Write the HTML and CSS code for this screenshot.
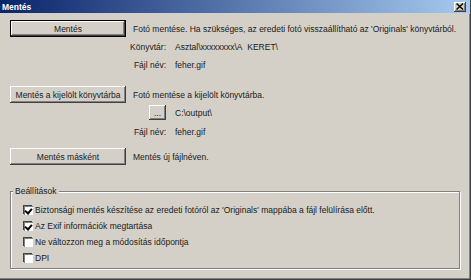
FILE: index.html
```html
<!DOCTYPE html>
<html lang="hu">
<head>
    <meta charset="UTF-8">
    <title>Mentés</title>
    <link rel="stylesheet" href="styles.css">
</head>
<body>
    <div class="window">
        <div class="titlebar">
            <span class="title">Mentés</span>
            <span class="close-btn">
                <svg width="8" height="7" viewBox="0 0 8 7"><path d="M0.5 0.5 L7 6.5 M7 0.5 L0.5 6.5" stroke="#000" stroke-width="1.4"/></svg>
            </span>
        </div>
        <div class="content">
            <div class="section first">
                <div class="line">
                    <button class="btn default">Mentés</button>
                    <span class="desc">Fotó mentése. Ha szükséges, az eredeti fotó visszaállítható az 'Originals' könyvtárból.</span>
                </div>
                <div class="field f-dir">
                    <span class="label">Könyvtár:</span>
                    <span class="value">Asztal\xxxxxxxx\A&nbsp;&nbsp;KERET\</span>
                </div>
                <div class="field f-name">
                    <span class="label">Fájl név:</span>
                    <span class="value">feher.gif</span>
                </div>
            </div>

            <div class="section second">
                <div class="line">
                    <button class="btn">Mentés a kijelölt könyvtárba</button>
                    <span class="desc">Fotó mentése a kijelölt könyvtárba.</span>
                </div>
                <div class="field f-browse">
                    <span class="label"><button class="btn small">...</button></span>
                    <span class="value">C:\output\</span>
                </div>
                <div class="field f-name2">
                    <span class="label">Fájl név:</span>
                    <span class="value">feher.gif</span>
                </div>
            </div>

            <div class="section third">
                <div class="line">
                    <button class="btn">Mentés másként</button>
                    <span class="desc">Mentés új fájlnéven.</span>
                </div>
            </div>

            <div class="groupbox">
                <span class="legend">Beállítások</span>
                <div class="check-row"><span class="checkbox checked"></span>Biztonsági mentés készítése az eredeti fotóról az 'Originals' mappába a fájl felülírása előtt.</div>
                <div class="check-row"><span class="checkbox checked"></span>Az Exif információk megtartása</div>
                <div class="check-row"><span class="checkbox"></span>Ne változzon meg a módosítás időpontja</div>
                <div class="check-row"><span class="checkbox"></span>DPI</div>
            </div>
        </div>
    </div>
</body>
</html>
```

FILE: styles.css
```css
/* Classic dialog look */
body {
    margin: 0;
    padding: 0;
    background: #d4d0c8;
    font-family: 'Liberation Sans', Arial, sans-serif;
    font-size: 8.5px;
    color: #1a1a1a;
}

.window {
    width: 471px;
    height: 280px;
    box-sizing: border-box;
    background: #d4d0c8;
    border-right: 1px solid #404040;
    border-bottom: 1px solid #404040;
    box-shadow: inset -1px -1px #808080, inset -2px -2px #d4d0c8;
    overflow: hidden;
}

.titlebar {
    height: 13px;
    display: flex;
    align-items: center;
    justify-content: space-between;
    padding: 0 4px 0 2px;
    background: linear-gradient(90deg, #0a246a, #a6caf0);
    border-bottom: 1px solid #d4d0c8;
}

.title {
    color: #fff;
    font-weight: bold;
    font-size: 8.5px;
}

.close-btn {
    width: 12px;
    height: 10px;
    display: flex;
    align-items: center;
    justify-content: center;
    background: #d4d0c8;
    box-shadow: inset -1px -1px #404040, inset 1px 1px #fff, inset -2px -2px #808080;
}

.content {
    padding: 6px 0 0 10px;
}

.btn {
    font-family: inherit;
    font-size: inherit;
    color: #1a1a1a;
    background: #d4d0c8;
    border: none;
    padding: 0;
    width: 116px;
    height: 17px;
    box-shadow: inset -1px -1px #404040, inset 1px 1px #fff, inset -2px -2px #808080;
}

.btn.default {
    outline: 1px solid #000;
    outline-offset: -1px;
    box-shadow: inset -2px -2px #404040, inset 2px 2px #fff, inset -3px -3px #808080;
}

.btn.small {
    width: 17px;
    height: 15px;
}

.line {
    display: flex;
    align-items: center;
    gap: 7px;
    height: 17px;
}

.field {
    display: flex;
    align-items: center;
    height: 15px;
}

.label {
    width: 156px;
    text-align: right;
    display: flex;
    justify-content: flex-end;
}

.value {
    margin-left: 9px;
}

.f-dir { margin-top: 2px; }
.f-name { margin-top: 3px; }

.second { margin-top: 14px; }
.f-browse { margin-top: 2px; }
.f-name2 { margin-top: 4px; }

.third { margin-top: 9px; }

.groupbox {
    position: relative;
    margin-top: 26px;
    width: 450px;
    height: 78px;
    box-sizing: border-box;
    border: 1px solid #808080;
    box-shadow: 1px 1px #fff, inset 1px 1px #fff;
    padding: 10px 0 0 13px;
}

.legend {
    position: absolute;
    top: -6px;
    left: 2px;
    padding: 0 2px;
    background: #d4d0c8;
}

.check-row {
    display: flex;
    align-items: center;
    gap: 2px;
    height: 16px;
}

.checkbox {
    width: 9px;
    height: 9px;
    background: #fff;
    box-shadow: inset 1px 1px #808080, inset -1px -1px #fff, 1px 1px #d4d0c8, -1px -1px #404040;
    position: relative;
}

.checkbox.checked::after {
    content: '';
    position: absolute;
    left: 2px;
    top: 1px;
    width: 3px;
    height: 5px;
    border-right: 2px solid #000;
    border-bottom: 2px solid #000;
    transform: rotate(40deg);
}
```
